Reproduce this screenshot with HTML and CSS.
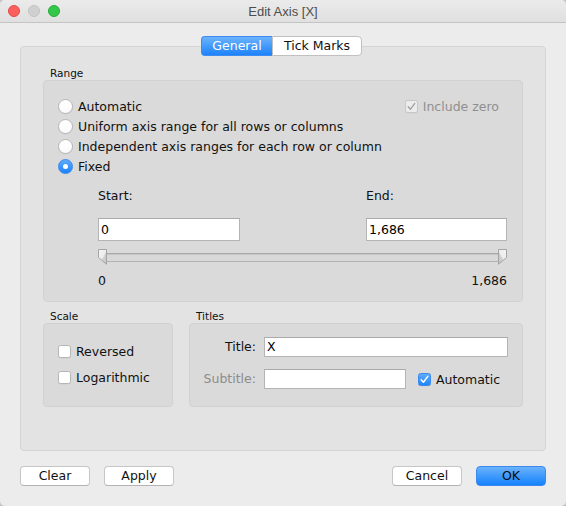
FILE: index.html
```html
<!DOCTYPE html>
<html lang="en">
<head>
<meta charset="utf-8">
<title>Edit Axis [X]</title>
<link rel="stylesheet" href="styles.css">
</head>
<body>
<div class="window">
  <div class="titlebar">
    <div class="lights">
      <span class="light red"></span>
      <span class="light gray"></span>
      <span class="light green"></span>
    </div>
    <div class="title">Edit Axis [X]</div>
    <div class="spacer"></div>
  </div>

  <div class="content">
    <div class="tabs">
      <div class="tab active">General</div>
      <div class="tab">Tick Marks</div>
    </div>

    <div class="group">
      <div class="section-label">Range</div>
      <div class="box range">
        <div class="row first">
          <div class="opt"><span class="radio"></span><span>Automatic</span></div>
          <div class="opt disabled">
            <span class="check off-disabled">
              <svg width="13" height="13" viewBox="0 0 13 13"><path d="M3.2 6.8 L5.4 9.3 L9.8 3.4" fill="none" stroke="#a0a0a0" stroke-width="1.3" stroke-linecap="round" stroke-linejoin="round"/></svg>
            </span>
            <span>Include zero</span>
          </div>
        </div>
        <div class="row"><div class="opt"><span class="radio"></span><span>Uniform axis range for all rows or columns</span></div></div>
        <div class="row"><div class="opt"><span class="radio"></span><span>Independent axis ranges for each row or column</span></div></div>
        <div class="row"><div class="opt"><span class="radio on"><span class="dot"></span></span><span>Fixed</span></div></div>

        <div class="fixed">
          <div class="fixed-grid">
            <div class="field-label">Start:</div>
            <div class="field-label">End:</div>
            <div class="input">0</div>
            <div class="input">1,686</div>
          </div>
          <div class="slider">
            <svg class="thumb" width="9" height="16" viewBox="0 0 9 16">
              <defs>
                <linearGradient id="tgl" x1="0" y1="0" x2="1" y2="1">
                  <stop offset="0" stop-color="#f6f6f6"/>
                  <stop offset="0.55" stop-color="#ececec"/>
                  <stop offset="0.56" stop-color="#d2d2d2"/>
                  <stop offset="1" stop-color="#c4c4c4"/>
                </linearGradient>
              </defs>
              <path d="M0.5 0.5H8.5V15.2L0.5 8.5Z" fill="url(#tgl)" stroke="#a4a4a4"/>
            </svg>
            <div class="track"></div>
            <svg class="thumb" width="9" height="16" viewBox="0 0 9 16">
              <defs>
                <linearGradient id="tgr" x1="1" y1="0" x2="0" y2="1">
                  <stop offset="0" stop-color="#f6f6f6"/>
                  <stop offset="0.55" stop-color="#ececec"/>
                  <stop offset="0.56" stop-color="#d2d2d2"/>
                  <stop offset="1" stop-color="#c4c4c4"/>
                </linearGradient>
              </defs>
              <path d="M0.5 0.5H8.5V8.5L0.5 15.2Z" fill="url(#tgr)" stroke="#a4a4a4"/>
            </svg>
          </div>
          <div class="values"><span>0</span><span>1,686</span></div>
        </div>
      </div>

      <div class="bottom-grid">
        <div class="col">
          <div class="section-label">Scale</div>
          <div class="box scale">
            <div class="row"><div class="opt"><span class="check"></span><span>Reversed</span></div></div>
            <div class="row"><div class="opt"><span class="check"></span><span>Logarithmic</span></div></div>
          </div>
        </div>
        <div class="col">
          <div class="section-label">Titles</div>
          <div class="box titles">
            <div class="titles-grid">
              <div class="tlabel">Title:</div>
              <div class="input small">X</div>
              <div class="tlabel muted">Subtitle:</div>
              <div class="subrow">
                <div class="input small sub"></div>
                <div class="opt">
                  <span class="check on">
                    <svg width="13" height="13" viewBox="0 0 13 13"><path d="M3.2 6.8 L5.4 9.3 L9.8 3.4" fill="none" stroke="#ffffff" stroke-width="1.5" stroke-linecap="round" stroke-linejoin="round"/></svg>
                  </span>
                  <span>Automatic</span>
                </div>
              </div>
            </div>
          </div>
        </div>
      </div>
    </div>

    <div class="buttons">
      <div class="btn-group">
        <div class="btn">Clear</div>
        <div class="btn">Apply</div>
      </div>
      <div class="btn-group">
        <div class="btn">Cancel</div>
        <div class="btn primary">OK</div>
      </div>
    </div>
  </div>
</div>
</body>
</html>
```

FILE: styles.css
```css
* { box-sizing: border-box; }

html, body {
  margin: 0;
  padding: 0;
}

body {
  width: 566px;
  height: 506px;
  overflow: hidden;
  background: #c4c4c4;
  font-family: "DejaVu Sans", sans-serif;
  font-size: 12.5px;
  color: #111;
}

.window {
  width: 566px;
  height: 506px;
  background: #ececec;
  border-radius: 5px;
  overflow: hidden;
  display: flex;
  flex-direction: column;
}

/* Title bar */
.titlebar {
  height: 23px;
  flex: none;
  border-bottom: 1px solid #c4c4c4;
  background: linear-gradient(#ebebeb, #e0e0e0);
  display: grid;
  grid-template-columns: 1fr auto 1fr;
  align-items: center;
}

.lights {
  display: flex;
  gap: 8px;
  padding-left: 8px;
}

.light {
  width: 12px;
  height: 12px;
  border-radius: 50%;
  display: block;
}
.light.red { background: #fc605c; border: 1px solid #e04b46; }
.light.gray { background: #d0d0d0; border: 1px solid #c2c2c2; }
.light.green { background: #34c84a; border: 1px solid #27aa39; }

.title {
  font-family: "Liberation Sans", Arial, sans-serif;
  font-size: 13px;
  color: #4d4d4d;
}

/* Content */
.content {
  flex: 1;
  display: flex;
  flex-direction: column;
  padding: 13px 20px 0;
}

.tabs {
  align-self: center;
  margin-right: 3px;
  display: flex;
  margin-bottom: -10px;
  position: relative;
  z-index: 1;
}

.tab {
  height: 20px;
  line-height: 18px;
  text-align: center;
  background: #fff;
  border: 1px solid #c0c0c0;
  color: #111;
}
.tab:first-child {
  width: 71px;
  border-radius: 4px 0 0 4px;
  border-right: none;
}
.tab:last-child {
  width: 90px;
  border-radius: 0 4px 4px 0;
}
.tab.active {
  background: linear-gradient(#6cb3fb, #1c83fb);
  border-color: #3f8cf0;
  color: #fff;
}

.group {
  height: 405px;
  flex: none;
  border: 1px solid #d4d4d4;
  border-radius: 4px;
  background: #e3e3e3;
  padding: 19px 22px 0;
}

.section-label {
  font-size: 10.5px;
  line-height: 14px;
  height: 14px;
  padding-left: 7px;
  color: #111;
}

.box {
  background: #dadada;
  border: 1px solid #d1d1d1;
  border-radius: 4px;
}

.range {
  padding: 15px 15px 12px 14px;
}

.row {
  height: 20px;
  display: flex;
  align-items: center;
}
.row.first {
  justify-content: space-between;
  padding-right: 8px;
}

.opt {
  display: flex;
  align-items: center;
  gap: 5px;
  white-space: nowrap;
}
.opt.disabled { color: #8f8f8f; }

.radio {
  width: 15px;
  height: 15px;
  border-radius: 50%;
  background: linear-gradient(#ffffff, #fbfbfb);
  border: 1px solid #b7b7b7;
  box-shadow: 0 0.5px 0.5px rgba(0,0,0,0.08);
  display: flex;
  align-items: center;
  justify-content: center;
  flex: none;
}
.radio.on {
  background: linear-gradient(#5eabfb, #1a82fb);
  border-color: #3a89ef;
}
.dot {
  width: 5px;
  height: 5px;
  border-radius: 50%;
  background: #fff;
}

.check {
  width: 13px;
  height: 13px;
  border-radius: 2.5px;
  background: #fff;
  border: 1px solid #b5b5b5;
  box-shadow: 0 0.5px 0.5px rgba(0,0,0,0.06);
  flex: none;
  position: relative;
}
.check svg {
  display: block;
  margin: -1px;
}
.check.off-disabled {
  background: #ececec;
  border-color: #c6c6c6;
}
.check.on {
  background: linear-gradient(#5eabfb, #1f85fb);
  border-color: #3a89ef;
}

/* Fixed area */
.fixed {
  margin: 10px 0 0 40px;
}

.fixed-grid {
  display: grid;
  grid-template-columns: 142px 141px;
  justify-content: space-between;
}

.field-label {
  height: 20px;
  line-height: 20px;
  margin-bottom: 12px;
}

.input {
  height: 23px;
  line-height: 21px;
  background: #fff;
  border: 1px solid #b4b4b4;
  border-top-color: #aaaaaa;
  padding-left: 2px;
  color: #000;
}
.input.small {
  height: 20px;
  line-height: 18px;
}

.slider {
  margin-top: 8px;
  height: 16px;
  display: flex;
}
.thumb {
  display: block;
  flex: none;
}
.track {
  flex: 1;
  height: 9px;
  margin-top: 4px;
  background: #d8d8d8;
  border-top: 1px solid #a9a9a9;
  border-bottom: 1px solid #b3b3b3;
  box-shadow: inset 0 1px 0 #c6c6c6;
}

.values {
  margin-top: 8px;
  height: 16px;
  line-height: 16px;
  display: flex;
  justify-content: space-between;
}

/* Bottom sections */
.bottom-grid {
  margin-top: 7px;
  display: grid;
  grid-template-columns: 130px 1fr;
  column-gap: 16px;
}

.scale {
  height: 84px;
  padding: 17px 10px 0 14px;
  display: flex;
  flex-direction: column;
  gap: 6px;
}

.titles {
  height: 84px;
  padding: 13px 14px 0 9px;
}

.titles-grid {
  display: grid;
  grid-template-columns: 57px 1fr;
  column-gap: 8px;
  row-gap: 12px;
  align-items: center;
}

.tlabel {
  text-align: right;
  height: 20px;
  line-height: 20px;
}
.tlabel.muted { color: #8c8c8c; }

.subrow {
  display: flex;
  align-items: center;
  gap: 12px;
}
.input.sub {
  width: 142px;
}

/* Buttons */
.buttons {
  margin-top: 15px;
  display: flex;
  justify-content: space-between;
}
.btn-group {
  display: flex;
  gap: 14px;
}
.btn {
  width: 70px;
  height: 20px;
  line-height: 18px;
  text-align: center;
  background: #fff;
  border: 1px solid #c6c6c6;
  border-bottom-color: #b3b3b3;
  border-radius: 4px;
  color: #111;
}
.btn.primary {
  background: linear-gradient(#6ab2fb, #1482fd);
  border-color: #3c88ec;
  color: #0a0a0a;
}
```
